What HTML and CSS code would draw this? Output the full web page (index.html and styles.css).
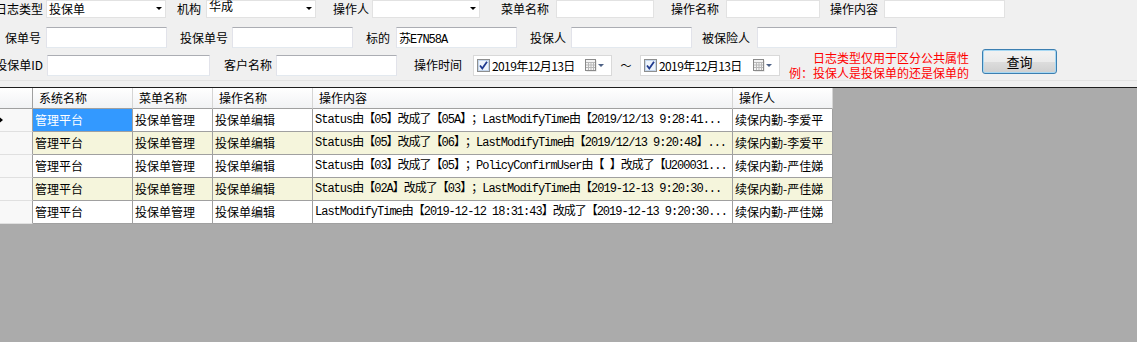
FILE: index.html
```html
<!DOCTYPE html>
<html lang="zh-CN">

<head>
    <meta charset="UTF-8">
    <title>操作日志查询</title>
    <link rel="stylesheet" href="styles.css">
</head>

<body>
    <form class="query">
        <div class="row row-1">
            <span class="lbl w48">日志类型</span>
            <div class="combo w120 ml3"><span>投保单</span><i class="arrow"></i></div>
            <span class="lbl w35">机构</span>
            <div class="combo w110 ml5"><span class="up">华成</span><i class="arrow"></i></div>
            <span class="lbl w53">操作人</span>
            <div class="combo w108 ml3"><span></span><i class="arrow"></i></div>
            <span class="lbl w69">菜单名称</span>
            <input class="tb w98 ml7" type="text">
            <span class="lbl w65">操作名称</span>
            <input class="tb w94 ml7" type="text">
            <span class="lbl w58">操作内容</span>
            <input class="tb w121 ml6" type="text">
        </div>

        <div class="row row-2">
            <span class="lbl w46">保单号</span>
            <input class="tb w121 ml5" type="text">
            <span class="lbl w61">投保单号</span>
            <input class="tb w121 ml4" type="text">
            <span class="lbl w37">标的</span>
            <input class="tb w121 ml6 mono" type="text" value="苏E7N58A">
            <span class="lbl w49">投保人</span>
            <input class="tb w121 ml5" type="text">
            <span class="lbl w58">被保险人</span>
            <input class="tb w140 ml7" type="text">
        </div>

        <div class="row row-3">
            <span class="lbl w48">投保单ID</span>
            <input class="tb w163 ml4" type="text">
            <span class="lbl w62">客户名称</span>
            <input class="tb w121 ml4" type="text">
            <span class="lbl w65">操作时间</span>
            <div class="date w139 ml11">
                <svg class="check" width="13" height="13" viewBox="0 0 13 13">
                    <rect x="0.5" y="0.5" width="12" height="12" fill="#dfeaf6" stroke="#8e8f8f" />
                    <rect x="1.5" y="1.5" width="10" height="10" fill="#eef4fb" stroke="#c4d6ec" />
                    <path d="M3 6.5 L5.3 9.5 L10 2.8" fill="none" stroke="#1f3a8f" stroke-width="1.8" />
                </svg>
                <span class="date-text">2019年12月13日</span>
                <svg class="cal" width="20" height="13" viewBox="0 0 20 13">
                    <rect x="1.5" y="1.5" width="10" height="11" fill="#d8d8d8" />
                    <rect x="0.5" y="0.5" width="10" height="11" fill="#f4f4f4" stroke="#8a8a8a" />
                    <path d="M1 3.5 H10 M1 6 H10 M1 8.5 H10 M3.5 3 V11 M6 3 V11 M8.5 3 V11" stroke="#b8b8b8" stroke-width="1" />
                    <path d="M13 5 L19 5 L16 8 Z" fill="#4d6185" />
                </svg>
            </div>
            <span class="lbl tilde">～</span>
            <div class="date w140">
                <svg class="check" width="13" height="13" viewBox="0 0 13 13">
                    <rect x="0.5" y="0.5" width="12" height="12" fill="#dfeaf6" stroke="#8e8f8f" />
                    <rect x="1.5" y="1.5" width="10" height="10" fill="#eef4fb" stroke="#c4d6ec" />
                    <path d="M3 6.5 L5.3 9.5 L10 2.8" fill="none" stroke="#1f3a8f" stroke-width="1.8" />
                </svg>
                <span class="date-text">2019年12月13日</span>
                <svg class="cal" width="20" height="13" viewBox="0 0 20 13">
                    <rect x="1.5" y="1.5" width="10" height="11" fill="#d8d8d8" />
                    <rect x="0.5" y="0.5" width="10" height="11" fill="#f4f4f4" stroke="#8a8a8a" />
                    <path d="M1 3.5 H10 M1 6 H10 M1 8.5 H10 M3.5 3 V11 M6 3 V11 M8.5 3 V11" stroke="#b8b8b8" stroke-width="1" />
                    <path d="M13 5 L19 5 L16 8 Z" fill="#4d6185" />
                </svg>
            </div>
            <p class="note">日志类型仅用于区分公共属性<br>例：投保人是投保单的还是保单的</p>
            <button class="btn" type="submit">查询</button>
        </div>
    </form>

    <div class="grid">
        <div class="grid-row head">
            <div class="rh"></div>
            <div class="cell">系统名称</div>
            <div class="cell">菜单名称</div>
            <div class="cell">操作名称</div>
            <div class="cell">操作内容</div>
            <div class="cell">操作人</div>
        </div>
        <div class="grid-row">
            <div class="rh"><i class="current"></i></div>
            <div class="cell selected">管理平台</div>
            <div class="cell">投保单管理</div>
            <div class="cell">投保单编辑</div>
            <div class="cell mono">Status由【05】改成了【05A】；LastModifyTime由【2019/12/13 9:28:41...</div>
            <div class="cell">续保内勤-李爱平</div>
        </div>
        <div class="grid-row alt">
            <div class="rh"></div>
            <div class="cell">管理平台</div>
            <div class="cell">投保单管理</div>
            <div class="cell">投保单编辑</div>
            <div class="cell mono">Status由【05】改成了【06】；LastModifyTime由【2019/12/13 9:20:48】...</div>
            <div class="cell">续保内勤-李爱平</div>
        </div>
        <div class="grid-row">
            <div class="rh"></div>
            <div class="cell">管理平台</div>
            <div class="cell">投保单管理</div>
            <div class="cell">投保单编辑</div>
            <div class="cell mono">Status由【03】改成了【05】；PolicyConfirmUser由【 】改成了【U200031...</div>
            <div class="cell">续保内勤-严佳娣</div>
        </div>
        <div class="grid-row alt">
            <div class="rh"></div>
            <div class="cell">管理平台</div>
            <div class="cell">投保单管理</div>
            <div class="cell">投保单编辑</div>
            <div class="cell mono">Status由【02A】改成了【03】；LastModifyTime由【2019-12-13 9:20:30...</div>
            <div class="cell">续保内勤-严佳娣</div>
        </div>
        <div class="grid-row">
            <div class="rh"></div>
            <div class="cell">管理平台</div>
            <div class="cell">投保单管理</div>
            <div class="cell">投保单编辑</div>
            <div class="cell mono">LastModifyTime由【2019-12-12 18:31:43】改成了【2019-12-13 9:20:30...</div>
            <div class="cell">续保内勤-严佳娣</div>
        </div>
    </div>
</body>

</html>
```

FILE: styles.css
```css
body {
    margin: 0;
    background-color: #f0f0f0;
    color: #000000;
    font-family: "Noto Sans CJK SC", sans-serif;
    font-size: 12px;
    text-spacing-trim: space-all;
    overflow: hidden;
}

.query {
    height: 80px;
    margin: 0 0 0 -5px;
    border-bottom: 1px solid #e3e3e3;
}

.row {
    display: flex;
    align-items: center;
    white-space: nowrap;
}

.row-1 {
    height: 18px;
}

.row-2 {
    height: 21px;
    margin-top: 9px;
}

.row-3 {
    height: 30px;
    margin-top: 2px;
}

.lbl {
    flex: none;
    text-align: right;
    line-height: 16px;
}

.tilde {
    width: 28px;
    text-align: center;
    font-size: 11px;
}

/* widths and gaps of the form controls */
.w35 { width: 35px; }
.w37 { width: 37px; }
.w46 { width: 46px; }
.w48 { width: 48px; }
.w49 { width: 49px; }
.w53 { width: 53px; }
.w58 { width: 58px; }
.w61 { width: 61px; }
.w62 { width: 62px; }
.w65 { width: 65px; }
.w69 { width: 69px; }
.w94 { width: 94px; }
.w98 { width: 98px; }
.w108 { width: 108px; }
.w110 { width: 110px; }
.w120 { width: 120px; }
.w121 { width: 121px; }
.w139 { width: 139px; }
.w140 { width: 140px; }
.w163 { width: 163px; }
.ml3 { margin-left: 3px; }
.ml4 { margin-left: 4px; }
.ml5 { margin-left: 5px; }
.ml6 { margin-left: 6px; }
.ml7 { margin-left: 7px; }
.ml11 { margin-left: 11px; }

.combo {
    position: relative;
    flex: none;
    box-sizing: border-box;
    height: 18px;
    background-color: #fff;
    border: 1px solid #e2e2e2;
}

.combo span {
    display: block;
    padding-left: 2px;
    line-height: 16px;
}

.combo span.up {
    margin-top: -3px;
}

.combo .arrow {
    position: absolute;
    right: 3px;
    top: 6px;
    border-style: solid;
    border-width: 3px 3px 0 3px;
    border-color: #000 transparent transparent transparent;
}

.tb {
    flex: none;
    box-sizing: border-box;
    height: 21px;
    margin-top: 0;
    margin-bottom: 0;
    padding: 0 2px;
    background-color: #fff;
    border: 1px solid;
    border-color: #abadb3 #e2e3ea #e3e9ef #e2e3ea;
    font-family: "Noto Sans CJK SC", sans-serif;
    font-size: 12px;
}

.row-1 .tb {
    height: 18px;
    border-color: #e2e2e2;
}

.mono {
    font-family: "Liberation Mono", "Noto Sans CJK SC", monospace;
    letter-spacing: -1px;
    text-spacing-trim: space-all;
}

.date {
    display: flex;
    align-items: center;
    flex: none;
    box-sizing: border-box;
    height: 21px;
    background-color: #fff;
    border: 1px solid #d9d9d9;
}

.check {
    margin-left: 3px;
    flex: none;
}

.date-text {
    margin-left: 2px;
    letter-spacing: -0.6px;
}

.cal {
    margin-left: auto;
    margin-right: 6px;
    flex: none;
}

.note {
    flex: none;
    width: 189px;
    margin: 0;
    color: #ff0000;
    text-align: right;
    line-height: 15px;
}

.btn {
    flex: none;
    align-self: flex-start;
    width: 75px;
    height: 25px;
    margin: -1px 0 0 13px;
    padding: 0;
    border: 1px solid #3c7fb1;
    border-radius: 3px;
    background: linear-gradient(#f2f2f2 0%, #ebebeb 50%, #dddddd 51%, #cfcfcf 100%);
    box-shadow: inset 0 0 0 1px #a7d8f3;
    font-family: "Noto Sans CJK SC", sans-serif;
    font-size: 13px;
    color: #000;
}

.grid {
    height: 255px;
    margin-top: 6px;
    background-color: #ababab;
    border-top: 1px solid #1e1e1e;
}

.grid-row {
    display: grid;
    grid-template-columns: 33px 100px 80px 100px 420px 100px;
    height: 23px;
}

.grid-row.head {
    height: 21px;
}

.cell {
    box-sizing: border-box;
    padding-left: 2px;
    overflow: hidden;
    white-space: nowrap;
    line-height: 22px;
    background-color: #fff;
    border-right: 1px solid #a0a0a0;
    border-bottom: 1px solid #a0a0a0;
}

.grid-row.alt .cell {
    background-color: #f5f5dc;
}

.cell.selected {
    background-color: #3399ff;
    color: #fff;
}

.head .cell {
    padding-left: 6px;
    line-height: 20px;
    background: linear-gradient(#ffffff, #f1f2f4);
    border-right-color: #d5d5d5;
    border-bottom-color: #a0a0a0;
}

.rh {
    position: relative;
    box-sizing: border-box;
    background-color: #f8f8f8;
    border-right: 1px solid #a0a0a0;
    border-bottom: 1px solid #e0e0e0;
}

.head .rh {
    background: linear-gradient(#ffffff, #f1f2f4);
    border-bottom-color: #a0a0a0;
}

.current {
    position: absolute;
    left: -2px;
    top: 7px;
    border-style: solid;
    border-width: 4px 0 4px 5px;
    border-color: transparent transparent transparent #000;
}
```
